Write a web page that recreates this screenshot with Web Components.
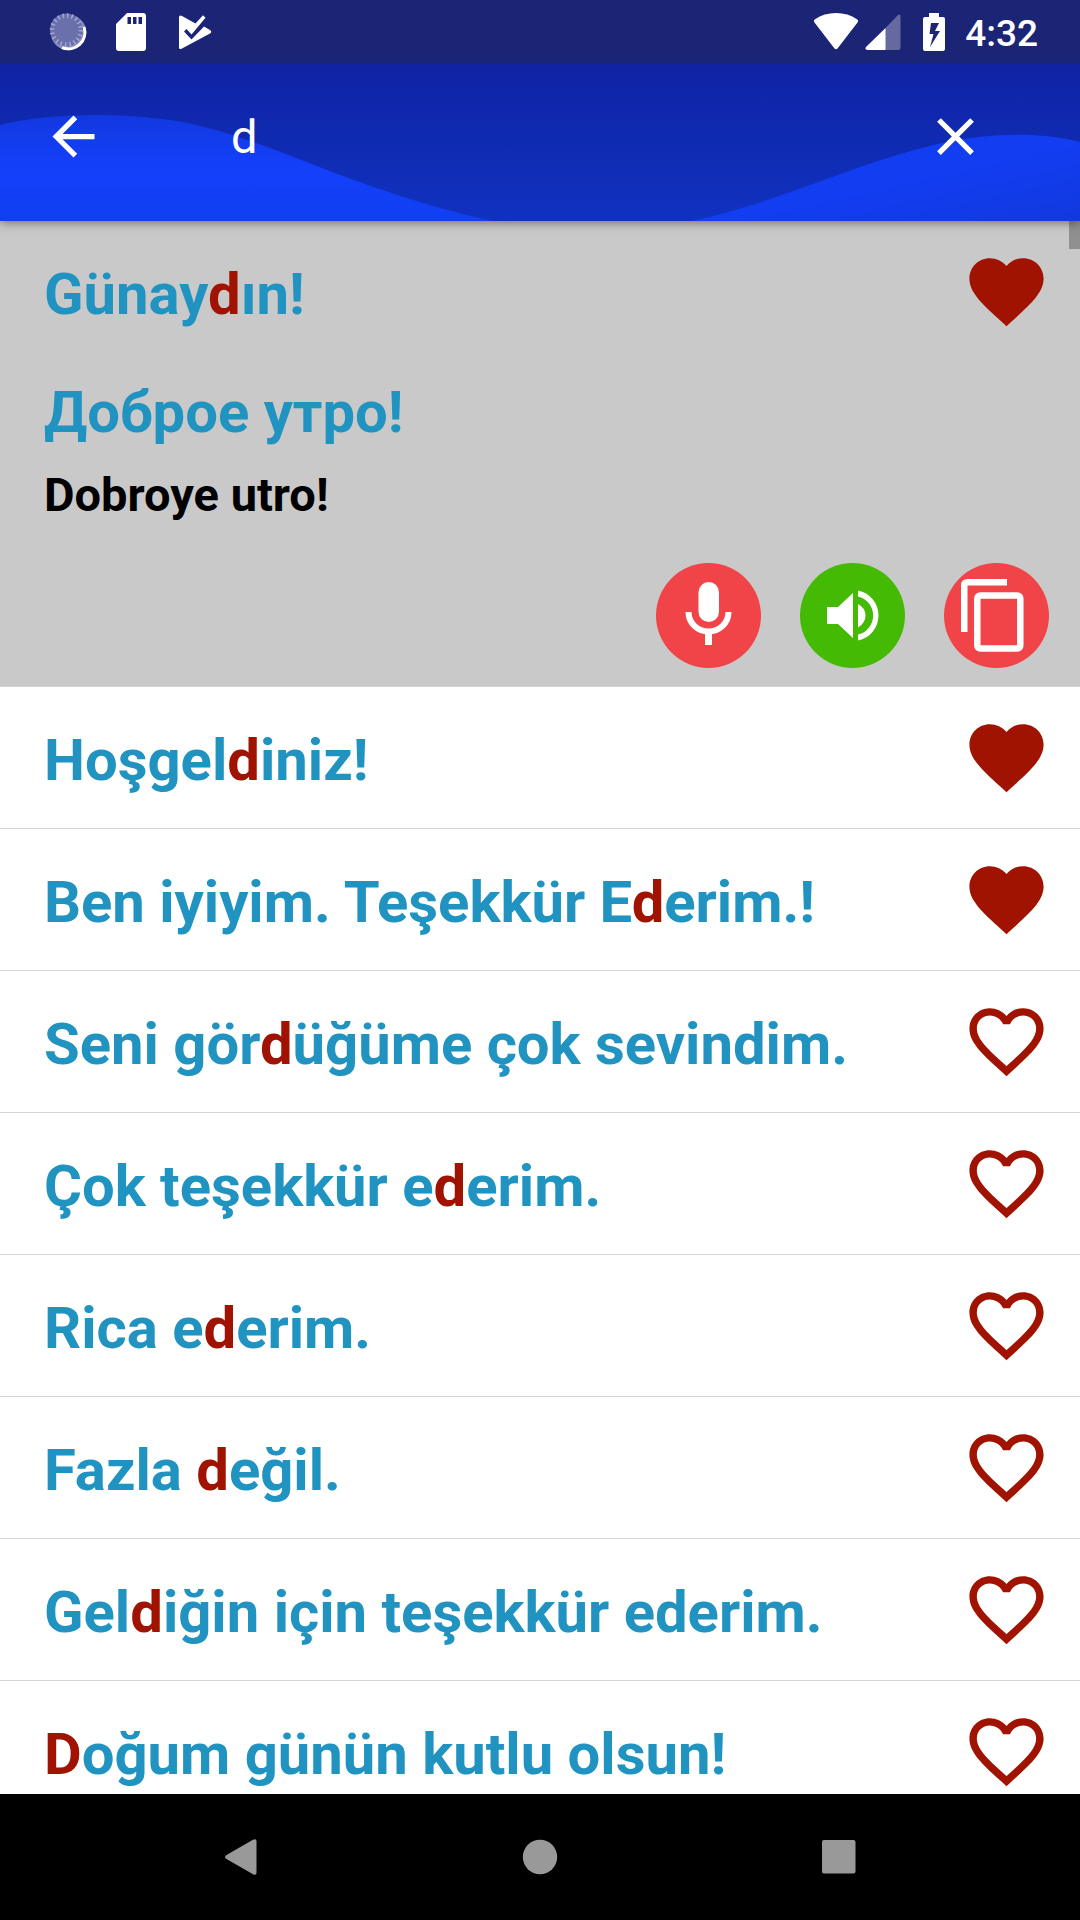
<!DOCTYPE html>
<html lang="tr">
<head>
<meta charset="utf-8">
<meta name="viewport" content="width=device-width">
<title>Phrasebook search</title>
<style>
html, body { margin: 0; height: 100%; }
body { font-family: Roboto, "Noto Sans", sans-serif; background: #fff; overflow: hidden; }
</style>
</head>
<body>
<phrase-app></phrase-app>
<script>
const base = `*{box-sizing:border-box} button{border:0;background:none;padding:0;margin:0;font:inherit;color:inherit;display:flex;align-items:center;justify-content:center} svg{display:block;flex:none}`;
function define(name, css, html, init) {
  const t = document.createElement('template');
  t.innerHTML = `<style>${base}${css}</style>${html}`;
  customElements.define(name, class extends HTMLElement {
    constructor() {
      super();
      this.attachShadow({ mode: 'open' }).append(t.content.cloneNode(true));
    }
    connectedCallback() { if (init) init.call(this, this.shadowRoot); }
  });
}

define('status-bar', `
:host{display:flex;align-items:center;justify-content:space-between;position:relative;z-index:2;height:63px;padding:0 42px 0 48px;background:#1b2475;color:#fff;font-size:37px;line-height:44px;font-weight:500}
.left{display:flex;align-items:center;gap:27px}
.right{display:flex;align-items:center}
time{margin-left:18px;padding-top:4px}
.bat{margin-left:20px}.sig{margin-left:6px}`, `
<div class="left">
<svg width="40" height="40" viewBox="0 0 40 40"><circle cx="20.500" cy="20.500" r="17.800" fill="#8a8fc0"/><path d="M36 15a16.500 16.500 0 0 1-22 20.500" fill="none" stroke="#fff" stroke-width="3"/><circle cx="18.500" cy="18" r="16.500" fill="#6a70ab"/><circle cx="18.500" cy="18" r="14.500" fill="none" stroke="#a3a7d0" stroke-width="4.500" stroke-dasharray="1.500 3.056"/></svg>
<svg width="32" height="40" viewBox="0 0 32 40"><path fill="#fff" fill-rule="evenodd" d="M12 1h16a3 3 0 0 1 3 3v32a3 3 0 0 1-3 3H4a3 3 0 0 1-3-3V12zM12.500 5v7h3.500V5zM18 5v7h3.500V5zM23.500 5v7H27V5z"/></svg>
<svg width="40" height="36" viewBox="-3 0 40 36"><path fill="#fff" d="M2 3.500q0-3 3-1.500l13.500 7.500L26 1.200l2.500 2.500-14 16.800-5-5.500-2.500 2.500 7.500 8L27 12.500l6 3.500q2.500 1.800 0 3.500L5 34.500q-3 1.500-3-1z"/></svg>
</div>
<div class="right">
<svg width="46" height="40" viewBox="0 0 46 40"><path fill="#fff" d="M1.500 10.500Q0 8.500 2 7.200 11 1 23 1t21 6.200q2 1.300.5 3.300L24.500 36.500q-1.500 1.500-3 0z"/></svg>
<svg class="sig" width="36" height="40" viewBox="0 0 36 40"><path fill="#646a9f" d="M20 16.500 32.500 3.500Q35.500 1 35.500 5v31q0 2-2 2H20z"/><path fill="#fff" d="M20.500 16v22H2.500q-3-.5-1.500-3z"/></svg>
<svg class="bat" width="26" height="40" viewBox="0 0 26 40"><path fill="#fff" fill-rule="evenodd" d="M8 1h10v4h4q2 0 2 2v30q0 2-2 2H4q-2 0-2-2V7q0-2 2-2h4zM10 11 8.500 22h4L9 35l10-16h-5l4-8z"/></svg>
<time>4:32</time>
</div>`);

define('search-bar', `
:host{display:grid;grid-template-columns:63px minmax(0,1fr) 63px;align-items:center;height:158px;padding:0 93px 11px 42px;position:relative;z-index:1;isolation:isolate;background:linear-gradient(#0f23a4,#1032c0);color:#fff;box-shadow:0 1px 10px rgba(0,0,0,.5)}
.wave{position:absolute;inset:0;width:100%;height:100%;z-index:-1}
input{width:100%;border:0;outline:0;background:none;color:#fff;font:400 47px/55px Roboto,"Noto Sans",sans-serif;padding:0 0 0 126px;height:63px}`, `
<svg class="wave" viewBox="0 0 1080 158" preserveAspectRatio="none" aria-hidden="true">
<defs><linearGradient id="g" x1="0" y1="0" x2="0" y2="1"><stop offset="0" stop-color="#1238df"/><stop offset=".5" stop-color="#1440fb"/><stop offset="1" stop-color="#103ff0"/></linearGradient>
<linearGradient id="h" x1="0" y1="0" x2="1" y2="1"><stop offset="0" stop-color="#123cf4"/><stop offset=".55" stop-color="#123df0"/><stop offset="1" stop-color="#1238df"/></linearGradient></defs>
<path fill="url(#g)" d="M0 62C50 49 140 48 200 63C280 82 360 129 492 158H0z"/>
<path fill="url(#h)" d="M692 158C790 136 850 102 930 83C975 71 1035 67 1080 79V158z"/></svg>
<button aria-label="Back"><svg width="63" height="63" viewBox="0 0 24 24"><path fill="#fff" d="M20 11H7.830l5.590-5.590L12 4l-8 8 8 8 1.410-1.410L7.830 13H20z"/></svg></button>
<input type="text" value="d" aria-label="Search">
<button aria-label="Clear"><svg width="63" height="63" viewBox="0 0 24 24"><path fill="#fff" d="M19 6.410 17.590 5 12 10.590 6.410 5 5 6.410 10.590 12 5 17.590 6.410 19 12 13.410 17.590 19 19 17.590 13.410 12z"/></svg></button>`);

define('fav-button', `
:host{display:block} svg{fill:#a01300}
.full{display:none} :host([on]) .full{display:block} :host([on]) .line{display:none}`, `
<button aria-label="Favourite">
<svg class="full" width="89" height="89" viewBox="0 0 24 24"><path d="M12 21.350l-1.450-1.320C5.400 15.360 2 12.280 2 8.500 2 5.420 4.420 3 7.500 3c1.740 0 3.410.81 4.500 2.090C13.090 3.810 14.760 3 16.500 3 19.580 3 22 5.420 22 8.500c0 3.780-3.400 6.860-8.550 11.540z"/></svg>
<svg class="line" width="89" height="89" viewBox="0 0 24 24"><path d="M16.500 3c-1.740 0-3.410.81-4.500 2.090C10.910 3.810 9.240 3 7.500 3 4.420 3 2 5.420 2 8.500c0 3.780 3.400 6.860 8.550 11.540L12 21.350l1.450-1.320C18.600 15.360 22 12.280 22 8.500 22 5.420 19.580 3 16.500 3zm-4.400 15.550l-.1.100-.1-.1C7.140 14.240 4 11.390 4 8.500 4 6.500 5.500 5 7.500 5c1.540 0 3.040.99 3.570 2.360h1.870C13.460 5.990 14.960 5 16.500 5c2 0 3.500 1.500 3.500 3.500 0 2.890-3.140 5.740-7.900 10.050z"/></svg>
</button>`);

define('phrase-row', `
:host{display:block;border-bottom:1px solid #d6d6d6;color:#2093c1;font-size:58px;line-height:68px;font-weight:700}
:host([open]){background:#c9c9c9}
.head{display:flex;align-items:center;justify-content:space-between;height:141px;padding:0 29px 0 44px}
.text{padding-top:5px;white-space:nowrap}
`, `
<div class="head"><div class="text"><slot></slot></div><fav-button></fav-button></div><slot name="detail"></slot>`,
function (root) { root.querySelector('fav-button').toggleAttribute('on', this.hasAttribute('fav')); });

define('phrase-detail', `
:host{display:block;padding:16px 31px 18px 44px}
.latin{display:block;margin-top:21px;color:#000;font-size:47px;line-height:55px}
.actions{display:flex;justify-content:flex-end;gap:39px;margin-top:41px}
.actions button{width:105px;height:105px;border-radius:50%;background:#f04448;color:#fff}
.actions .play{background:#45ba04}`, `
<slot></slot><span class="latin"><slot name="latin"></slot></span>
<div class="actions">
<button aria-label="Record"><svg width="105" height="105" viewBox="0 0 105 105"><rect x="42.500" y="19" width="20.500" height="40" rx="10.200" fill="#fff"/><path fill="none" stroke="#fff" stroke-width="6" d="M32.500 49c0 11 9 19.500 20 19.500s20-8.500 20-19.500"/><path fill="#fff" d="M49 68h7v14h-7z"/></svg></button>
<button class="play" aria-label="Listen"><svg width="105" height="105" viewBox="0 0 105 105" fill="#fff"><path d="M27 44h11l15-14v45L38 61H27zM58 41q7.500 4 7.500 11.500T58 64.500z"/><path d="M58 27.500a25.500 25.500 0 0 1 0 50V71.500a19.500 19.500 0 0 0 0-38z"/></svg></button>
<button aria-label="Copy"><svg width="105" height="105" viewBox="0 0 105 105"><path fill="#fff" d="M63 16v6.500H23.500V69H17V22.500Q17 16 23.500 16z"/><rect x="33.300" y="32.500" width="43" height="53" rx="3" fill="none" stroke="#fff" stroke-width="6.500"/></svg></button>
</div>`);

define('nav-bar', `
:host{display:flex;height:126px;padding:0 8.500%;background:#000}
button{flex:1}`, `
<button aria-label="Back"><svg width="32" height="38" viewBox="0 0 32 38"><path fill="#999" d="M1.500 17 28 1.800Q31.500 0 31.500 3.500v31q0 3.500-3.500 1.700L1.500 21q-3-2 0-4z"/></svg></button>
<button aria-label="Home"><svg width="36" height="36" viewBox="0 0 36 36"><circle cx="18" cy="18" r="17.200" fill="#999"/></svg></button>
<button aria-label="Overview"><svg width="36" height="36" viewBox="0 0 36 36"><rect x="1" y="1" width="33.500" height="33.500" rx="2" fill="#999"/></svg></button>`);

define('phrase-app', `
:host{display:flex;flex-direction:column;height:100vh}
status-bar,search-bar,nav-bar{flex:none}
main{flex:1;min-height:0;overflow:hidden;position:relative}
.thumb{position:absolute;right:0;top:0;width:11px;height:28px;background:#909090}
mark{background:none;color:#a01300}`, `
<status-bar></status-bar>
<search-bar></search-bar>
<main>
<phrase-row open fav>Günay<mark>d</mark>ın!<phrase-detail slot="detail">Доброе утро!<span slot="latin">Dobroye utro!</span></phrase-detail></phrase-row>
<phrase-row fav>Hoşgel<mark>d</mark>iniz!</phrase-row>
<phrase-row fav>Ben iyiyim. Teşekkür E<mark>d</mark>erim.!</phrase-row>
<phrase-row>Seni gör<mark>d</mark>üğüme çok sevindim.</phrase-row>
<phrase-row>Çok teşekkür e<mark>d</mark>erim.</phrase-row>
<phrase-row>Rica e<mark>d</mark>erim.</phrase-row>
<phrase-row>Fazla <mark>d</mark>eğil.</phrase-row>
<phrase-row>Gel<mark>d</mark>iğin için teşekkür ederim.</phrase-row>
<phrase-row><mark>D</mark>oğum günün kutlu olsun!</phrase-row>
<div class="thumb"></div>
</main>
<nav-bar></nav-bar>`);
</script>
</body>
</html>
